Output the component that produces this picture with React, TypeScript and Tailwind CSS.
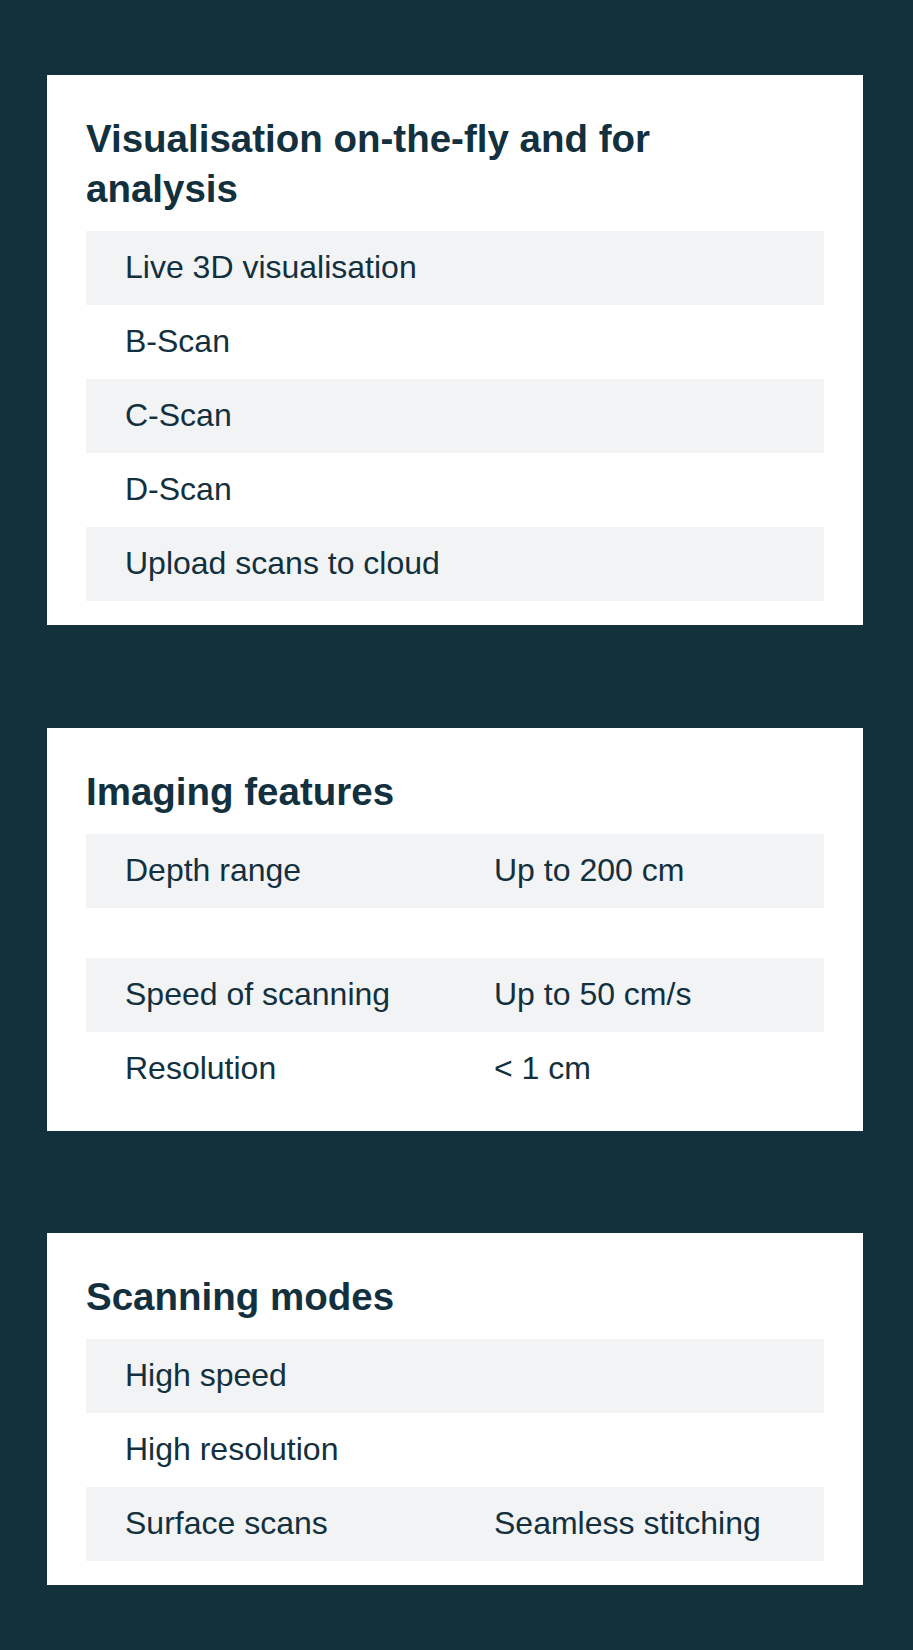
import React from "react";

type Row = { a: string; b?: string; h?: string };

const cards: { title: string; rows: Row[]; twoCol: boolean; pb: string }[] = [
  {
    title: "Visualisation on-the-fly and for analysis",
    twoCol: false,
    pb: "pb-[24px]",
    rows: [
      { a: "Live 3D visualisation" },
      { a: "B-Scan" },
      { a: "C-Scan" },
      { a: "D-Scan" },
      { a: "Upload scans to cloud" },
    ],
  },
  {
    title: "Imaging features",
    twoCol: true,
    pb: "pb-[25px]",
    rows: [
      { a: "Depth range", b: "Up to 200 cm" },
      { a: "", b: "", h: "empty" },
      { a: "Speed of scanning", b: "Up to 50 cm/s" },
      { a: "Resolution", b: "< 1 cm" },
    ],
  },
  {
    title: "Scanning modes",
    twoCol: true,
    pb: "pb-[24px]",
    rows: [
      { a: "High speed", b: "" },
      { a: "High resolution", b: "" },
      { a: "Surface scans", b: "Seamless stitching" },
    ],
  },
];

function Card({ title, rows, twoCol, pb }: { title: string; rows: Row[]; twoCol: boolean; pb: string }) {
  return (
    <section className={`bg-white w-[816px] pt-[39px] px-[39px] ${pb}`}>
      <h2 className="text-[38.5px] leading-[50px] font-bold text-[#12303d] max-w-[600px] mb-[17px]">
        {title}
      </h2>
      <div className="flex flex-col">
        {rows.map((r, i) => (
          <div
            key={i}
            className={`flex items-center ${r.h === "empty" ? "h-[50px]" : "h-[74px]"} ${
              i % 2 === 0 ? "bg-[#f2f3f5]" : "bg-white"
            }`}
          >
            <div className={`${twoCol ? "w-1/2" : "w-full"} pl-[39px] pb-[2px] text-[32px] text-[#12303d]`}>
              {r.a}
            </div>
            {twoCol && (
              <div className="w-1/2 pl-[39px] pb-[2px] text-[32px] text-[#12303d]">{r.b}</div>
            )}
          </div>
        ))}
      </div>
    </section>
  );
}

export default function App() {
  return (
    <div
      className="min-h-[1650px] bg-[#13303d] flex flex-col items-start pl-[47px] pt-[75px] pb-[64px] gap-[102.5px]"
      style={{ fontFamily: '"Liberation Sans", Arial, sans-serif' }}
    >
      {cards.map((c, i) => (
        <Card key={i} title={c.title} rows={c.rows} twoCol={c.twoCol} pb={c.pb} />
      ))}
    </div>
  );
}
